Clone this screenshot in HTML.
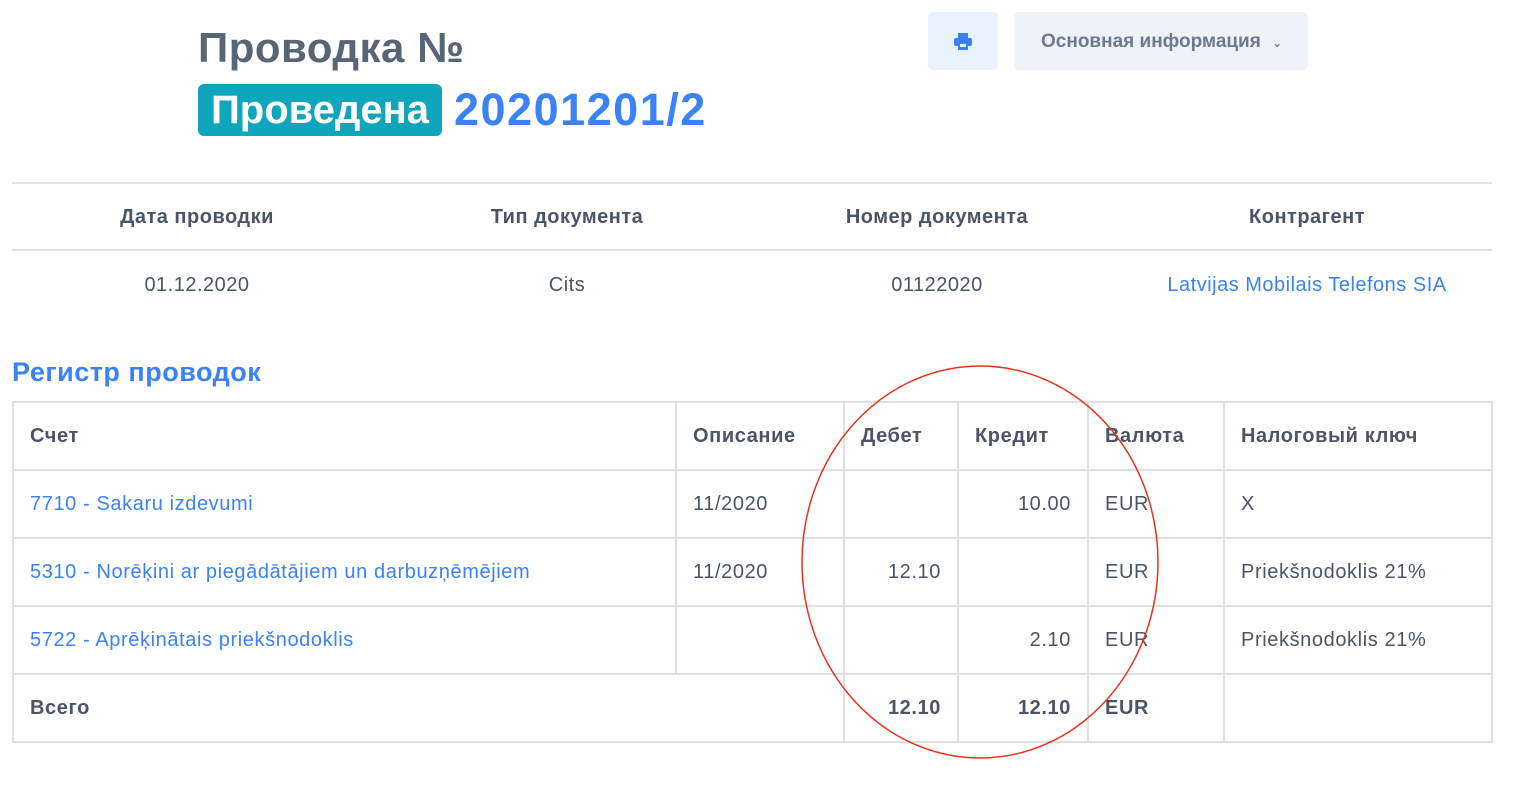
<!DOCTYPE html><html><head><meta charset="utf-8"><style>
body{margin:0;width:1532px;height:802px;background:#fff;font-family:"Liberation Sans","DejaVu Sans",sans-serif;position:relative;overflow:hidden;color:#4a5568}
.a{position:absolute;white-space:nowrap}
.h{font-size:42px;font-weight:bold;color:#586577}
.blue{color:#3b82f6}
.hl{position:absolute;left:12px;width:1480px;height:2px;background:#e2e2e2}
.c{position:absolute;font-size:20px;text-align:center;width:370px;letter-spacing:0.5px}
table{position:absolute;left:12px;top:401px;border-collapse:collapse;font-size:20px;letter-spacing:0.6px}
td{border:2px solid #e0e0e0;height:66px;padding:0 16px;color:#4a5568}
th{border:2px solid #e0e0e0;height:66px;padding:0 16px;text-align:left;font-weight:bold;color:#4a5568}
.r{text-align:right}
</style></head><body>
<div class="a h" style="left:198px;top:24px;letter-spacing:0.5px">Проводка №</div>
<div class="a" style="left:198px;top:84px;width:244px;height:52px;background:#0ea5bd;border-radius:6px;color:#fff;font-size:40px;font-weight:bold;text-align:center;line-height:52px">Проведена</div>
<div class="a h blue" style="left:454px;top:84px;color:#3b82f6;font-size:45px;letter-spacing:1.5px">20201201/2</div>
<div class="a" style="left:928px;top:12px;width:70px;height:58px;background:#ebf2ff;border-radius:5px">
<svg style="position:absolute;left:26px;top:21px" width="18" height="17" viewBox="0 0 18 17"><rect x="4" y="0" width="10" height="5" fill="#3b82f6"/><rect x="0" y="5" width="18" height="8" rx="2" fill="#3b82f6"/><rect x="4" y="10" width="10" height="7" fill="#3b82f6"/><rect x="6" y="11" width="6" height="3" fill="#ebf2ff"/></svg></div>
<div class="a" style="left:1014px;top:12px;width:294px;height:58px;background:#eff2f6;border-radius:5px;font-size:19px;font-weight:bold;color:#6b7a8f;line-height:60px;padding-left:27px;box-sizing:border-box">Основная информация <span style="font-size:12px;margin-left:6px">&#8964;</span></div>
<div class="hl" style="top:182px"></div><div class="hl" style="top:249px"></div>
<div class="c" style="left:12px;top:206px;font-weight:bold">Дата проводки</div>
<div class="c" style="left:382px;top:206px;font-weight:bold">Тип документа</div>
<div class="c" style="left:752px;top:206px;font-weight:bold">Номер документа</div>
<div class="c" style="left:1122px;top:206px;font-weight:bold">Контрагент</div>
<div class="c" style="left:12px;top:274px">01.12.2020</div>
<div class="c" style="left:382px;top:274px">Cits</div>
<div class="c" style="left:752px;top:274px">01122020</div>
<div class="c blue" style="left:1122px;top:274px">Latvijas Mobilais Telefons SIA</div>
<div class="a blue" style="left:12px;top:357px;font-size:27px;font-weight:bold;letter-spacing:0.5px">Регистр проводок</div>
<table>
<colgroup><col style="width:663px"><col style="width:168px"><col style="width:114px"><col style="width:130px"><col style="width:136px"><col style="width:268px"></colgroup>
<tr><th>Счет</th><th>Описание</th><th>Дебет</th><th>Кредит</th><th>Валюта</th><th>Налоговый ключ</th></tr>
<tr><td class="blue">7710 - Sakaru izdevumi</td><td>11/2020</td><td></td><td class="r">10.00</td><td>EUR</td><td>X</td></tr>
<tr><td class="blue">5310 - Norēķini ar piegādātājiem un darbuzņēmējiem</td><td>11/2020</td><td class="r">12.10</td><td></td><td>EUR</td><td>Priekšnodoklis 21%</td></tr>
<tr><td class="blue">5722 - Aprēķinātais priekšnodoklis</td><td></td><td></td><td class="r">2.10</td><td>EUR</td><td>Priekšnodoklis 21%</td></tr>
<tr style="font-weight:bold"><td colspan="2" style="font-weight:bold">Всего</td><td class="r" style="font-weight:bold">12.10</td><td class="r" style="font-weight:bold">12.10</td><td style="font-weight:bold">EUR</td><td></td></tr>
</table>
<svg class="a" style="left:0;top:0" width="1532" height="802"><ellipse cx="980" cy="562" rx="178" ry="196" fill="none" stroke="#e8321e" stroke-width="1.5"/></svg>
</body></html>
